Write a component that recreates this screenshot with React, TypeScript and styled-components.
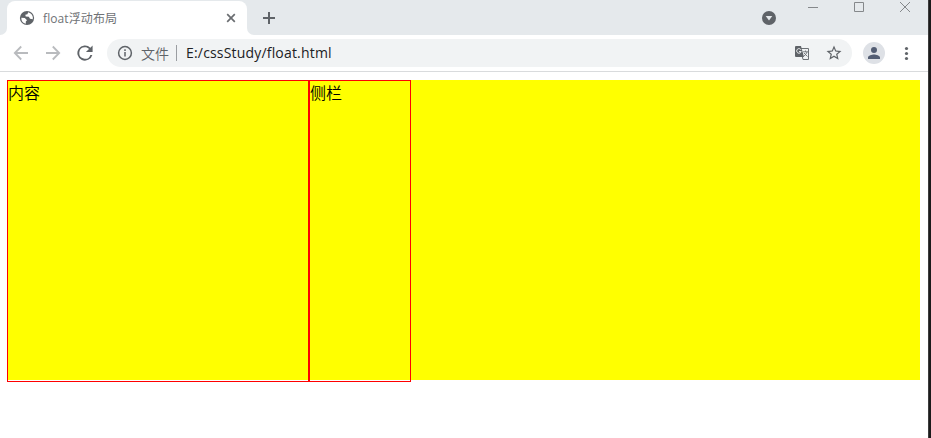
import React from "react";
import styled, { createGlobalStyle } from "styled-components";

const Global = createGlobalStyle`
  * { box-sizing: border-box; }
  html, body { margin: 0; background: #fff; overflow: hidden; }
  svg { display: block; }
`;
const Screen = styled.div`
  display: flex;
  width: 931px;
  height: 438px;
  font-family: "Open Sans", "Noto Sans CJK SC", sans-serif;
`;
const Window = styled.div`
  display: flex;
  flex-direction: column;
  width: 928px;
  background: #fff;
`;
const Edge = styled.div`
  flex: 1;
  background: #1b1b1b;
  border-left: 1px solid #3c3c3c;
`;
const TabStrip = styled.header`
  display: flex;
  height: 35px;
  background: #e5e9ec;
`;
const Corner = styled.div<{ $side: "left" | "right" }>`
  width: 7px;
  background: #fff;
  &::before {
    content: "";
    display: block;
    height: 35px;
    background: #e5e9ec;
    border-radius: ${(p) => (p.$side === "left" ? "0 0 7px 0" : "0 0 0 7px")};
  }
`;
const Tab = styled.div`
  display: flex;
  align-items: center;
  width: 240px;
  height: 34px;
  margin-top: 1px;
  padding: 0 10px 0 12px;
  background: #fff;
  border-radius: 8px 8px 0 0;
`;
const TabTitle = styled.span`
  flex: 1;
  margin: 2px 0 0 8px;
  color: #6f7276;
  font-size: 12px;
  line-height: 16px;
  letter-spacing: 0.1px;
  white-space: nowrap;
`;
const NewTab = styled.div`
  margin: 11px 0 0 8px;
`;
const Chevron = styled.div`
  margin: 11px 0 0 auto;
`;
const Controls = styled.div`
  display: flex;
  gap: 34px;
  margin: 1px 17px 0 31px;
`;
const Toolbar = styled.nav`
  display: flex;
  align-items: center;
  height: 37px;
  padding: 0 13px;
  border-bottom: 1px solid #d9dbdd;
`;
const NavIcons = styled.div`
  display: flex;
  gap: 16px;
`;
const Address = styled.div`
  display: flex;
  align-items: center;
  width: 745px;
  height: 28px;
  margin-left: 14px;
  padding: 0 9px 0 10px;
  border-radius: 14px;
  background: #f1f3f4;
`;
const Scheme = styled.span`
  margin-left: 8px;
  width: 28px;
  color: #5f6368;
  font-family: "Noto Sans CJK SC", sans-serif;
  font-size: 14px;
  font-weight: 350;
  line-height: 20px;
  white-space: nowrap;
`;
const Divider = styled.span`
  width: 1px;
  height: 16px;
  margin: 0 9px 0 7px;
  background: #9a9da1;
`;
const Url = styled.span`
  flex: 1;
  color: #202124;
  font-size: 14px;
  line-height: 20px;
  letter-spacing: 0.18px;
  white-space: nowrap;
`;
const AddressIcons = styled.div`
  display: flex;
  align-items: center;
  gap: 15px;
`;
const Avatar = styled.div`
  display: flex;
  align-items: center;
  justify-content: center;
  width: 22px;
  height: 22px;
  margin: 0 auto 0 11px;
  border-radius: 50%;
  background: #dee1e6;
`;
const Page = styled.main`
  padding: 8px 8px 0 7px;
`;
const Container = styled.section`
  display: flex;
  align-items: flex-start;
  width: 913px;
  height: 300px;
  background: #ff0;
`;
const Box = styled.div<{ $width: number }>`
  width: ${(p) => p.$width}px;
  height: 302px;
  border: 1px solid #f00;
  color: #000;
  font-family: "Noto Sans CJK SC", sans-serif;
  font-size: 16px;
  font-weight: 350;
  line-height: 23px;
`;

const Glyph = ({ d, size = 16, color = "#5f6368" }: { d: string; size?: number; color?: string }) => (
  <svg width={size} height={size} viewBox="0 0 24 24" fill={color}>
    <path d={d} />
  </svg>
);

export default function App() {
  return (
    <Screen>
      <Global />
      <Window>
        <TabStrip>
          <Corner $side="left" />
          <Tab>
            <svg width="16" height="16" viewBox="0 0 16 16">
              <circle cx="8" cy="8" r="7.1" fill="#5f6368" />
              <path d="M2.3 7.7 5.8 8.1 8 10.2 6.8 11.6V13.7A6 6 0 0 1 2.3 7.7Z M9.2 2.2 8.4 4.2 6.3 4.8 6.7 6.5 9.8 6.8 11 8.8 13.8 9.2A6 6 0 0 0 9.2 2.2Z" fill="#fff" />
            </svg>
            <TabTitle>float浮动布局</TabTitle>
            <svg width="12" height="12" viewBox="0 0 12 12" fill="none" stroke="#6a6d71" strokeWidth="1.7">
              <path d="m2.2 2.2 7.6 7.6M9.8 2.2 2.2 9.8" />
            </svg>
          </Tab>
          <Corner $side="right" />
          <NewTab>
            <svg width="14" height="14" viewBox="0 0 14 14" fill="none" stroke="#5f6368" strokeWidth="2">
              <path d="M7 1v12M1 7h12" />
            </svg>
          </NewTab>
          <Chevron>
            <svg width="14" height="14" viewBox="0 0 14 14">
              <circle cx="7" cy="7" r="7" fill="#5f6368" />
              <path d="M3.7 5h6.6L7 9.5Z" fill="#e5e9ec" />
            </svg>
          </Chevron>
          <Controls>
            <svg width="12" height="12" viewBox="0 0 12 12" stroke="#85888b"><path d="M1 6.5h10" /></svg>
            <svg width="12" height="12" viewBox="0 0 12 12" fill="none" stroke="#85888b"><path d="M1.5 1.5h9v9h-9z" /></svg>
            <svg width="12" height="12" viewBox="0 0 12 12" stroke="#85888b"><path d="m1 1 10 10M11 1 1 11" /></svg>
          </Controls>
        </TabStrip>
        <Toolbar>
          <NavIcons>
            <svg width="16" height="16" viewBox="0 0 16 16" fill="none" stroke="#b9bbbe" strokeWidth="1.8"><path d="M15 8H2M8.2 1.5 1.8 8l6.4 6.5" /></svg>
            <svg width="16" height="16" viewBox="0 0 16 16" fill="none" stroke="#b9bbbe" strokeWidth="1.8"><path d="M1 8h13M7.8 1.5 14.2 8l-6.4 6.5" /></svg>
            <svg width="16" height="16" viewBox="4 4 16 16" fill="#5f6368">
              <path d="M17.65 6.35A8 8 0 1 0 19.73 14h-2.08A6 6 0 1 1 12 6c1.66 0 3.14.69 4.22 1.78L13 11h7V4z" transform="translate(.6 .6) scale(.95)" />
            </svg>
          </NavIcons>
          <Address>
            <svg width="16" height="16" viewBox="0 0 16 16" fill="none" stroke="#5f6368" strokeWidth="1.5">
              <circle cx="8" cy="8" r="6.4" /><path d="M8 7v4.5M8 4.3v1.6" />
            </svg>
            <Scheme>文件</Scheme>
            <Divider />
            <Url>E:/cssStudy/float.html</Url>
            <AddressIcons>
              <svg width="16" height="16" viewBox="0 0 16 16">
                <path d="M6.5 3.5h8v11H9z" fill="#f1f3f4" stroke="#6d7175" />
                <path d="M2 1h5l3 11H2a1 1 0 0 1-1-1V2a1 1 0 0 1 1-1Z" fill="#5f6368" />
                <path d="M7 4.8A2.3 2.3 0 1 0 7.2 6.6H5" fill="none" stroke="#f1f3f4" />
                <path d="M9 6.8h5M11.5 5.5v1.3M13 7q-.7 2.5-3 4M10 8l3.5 3.5" fill="none" stroke="#6d7175" strokeWidth=".9" />
              </svg>
              <Glyph size={18} d="M22 9.24l-7.19-.62L12 2 9.19 8.63 2 9.24l5.46 4.73L5.82 21 12 17.27 18.18 21l-1.63-7.03L22 9.24zM12 15.4l-3.76 2.27 1-4.28-3.32-2.88 4.38-.38L12 6.1l1.71 4.04 4.38.38-3.32 2.88 1 4.28L12 15.4z" />
            </AddressIcons>
          </Address>
          <Avatar>
            <Glyph size={18} color="#535d73" d="M12 12a4 4 0 1 0 0-8 4 4 0 0 0 0 8zm0 2c-2.67 0-8 1.34-8 4v2h16v-2c0-2.66-5.33-4-8-4z" />
          </Avatar>
          <svg width="16" height="16" viewBox="0 0 16 16" fill="#5f6368">
            <circle cx="7.5" cy="3.5" r="1.6" /><circle cx="7.5" cy="8.5" r="1.6" /><circle cx="7.5" cy="13.5" r="1.6" />
          </svg>
        </Toolbar>
        <Page>
          <Container>
            <Box $width={302}>内容</Box>
            <Box $width={102}>侧栏</Box>
          </Container>
        </Page>
      </Window>
      <Edge />
    </Screen>
  );
}
